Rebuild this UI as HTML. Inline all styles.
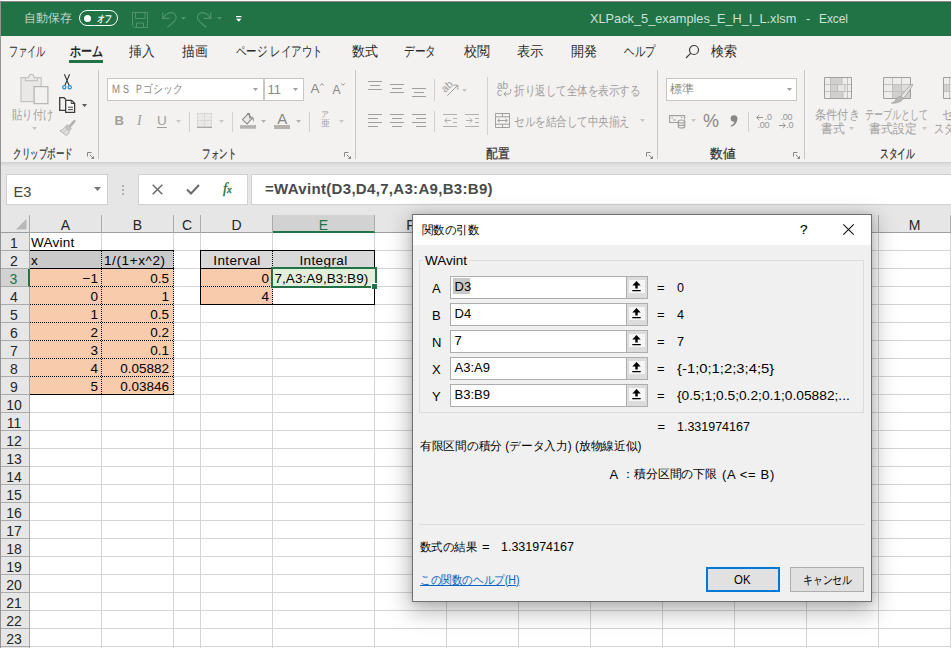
<!DOCTYPE html>
<html lang="ja"><head><meta charset="utf-8"><title>Excel</title><style>
*{box-sizing:border-box}
html,body{margin:0;padding:0}
body{width:951px;height:648px;position:relative;overflow:hidden;background:#fff;font-family:"Liberation Sans",sans-serif;font-size:12px;color:#262626}
.a{position:absolute;white-space:nowrap;line-height:1}
.t{position:absolute;white-space:nowrap;line-height:1;transform-origin:0 0}
svg{position:absolute;overflow:visible}
#title{left:0;top:0;width:951px;height:36px;background:#217346}
#tabs{left:0;top:36px;width:951px;height:32px;background:#f3f2f1}
#ribbon{left:0;top:68px;width:951px;height:94px;background:#f3f2f1}
#fbar{left:0;top:162px;width:951px;height:53px;background:#e6e6e6}
.tab{font-size:13.500px;color:#2b2a29;top:44.700px}
.gl{font-size:12.500px;color:#323130;top:148px;-webkit-text-stroke:.25px #323130}
.dim{color:#a19f9d}
.sep{position:absolute;width:1px;background:#c8c6c4}
.box{position:absolute;background:#fff;border:1px solid #c8c6c4}
.cell{position:absolute;height:18px;line-height:20.500px;font-size:13.5px;color:#000;white-space:nowrap;overflow:hidden}
.rh{position:absolute;left:1px;width:28px;height:18px;line-height:20px;text-align:center;padding-right:2px;font-size:14px;color:#262626;border-bottom:1px solid #ababab}
.ch{position:absolute;top:215px;height:18px;line-height:20px;text-align:center;font-size:14px;color:#262626;border-right:1px solid #ababab}
.vl{position:absolute;top:233px;width:1px;height:415px;background:#d4d4d4}
.dl{font-size:13px;color:#000}
.fld{position:absolute;left:450px;width:198px;height:23px;background:#fff;border:1px solid #adadad}
.fbtn{position:absolute;left:626px;width:22px;height:23px;background:#dcdcdc;border:1px solid #adadad}
.fbtn i{position:absolute;left:2px;top:3px;width:16px;height:13px;background:#f6f6f6}
</style></head><body>
<div id="title" class="a">
<div class="t" style="left:24px;top:12px;font-size:12px;color:#bdd6c7">自動保存</div>
<div class="a" style="left:79px;top:10px;width:39px;height:16px;border:1px solid #fff;border-radius:8px"></div>
<div class="a" style="left:84px;top:14.500px;width:7px;height:7px;border-radius:4px;background:#fff"></div>
<div class="t" style="left:97.500px;top:13.500px;font-size:10px;color:#fff;font-weight:bold;transform:scaleX(.72) skewX(-12deg)">オフ</div>
<svg style="left:132px;top:12px" width="16" height="16" viewBox="0 0 16 16" fill="none" stroke="#4d946d" stroke-width="1"><path d="M.5 .5h15v15H2.500l-2-2z"/><path d="M3.500 .5v6h9.500v-6M4.500 15.500v-4.500h7v4.500"/></svg>
<svg style="left:161px;top:11px" width="17" height="17" viewBox="0 0 17 17" fill="none" stroke="#4d946d" stroke-width="1.1"><path d="M1.700 1.200V7.400H8.300"/><path d="M2.300 7C4.500 3 8.500 .8 12 2c3.800 1.400 4 5.500 1.500 8L6.300 16.500"/></svg>
<svg style="left:181px;top:17px" width="5" height="3" viewBox="0 0 5 3"><path d="M0 0h5L2.500 3z" fill="#4d946d"/></svg>
<svg style="left:196px;top:11px" width="17" height="17" viewBox="0 0 17 17" fill="none" stroke="#4d946d" stroke-width="1.1"><path d="M14.700 1.200V7.400H7.800"/><path d="M14.100 7C12 3 8 .8 4.500 2C.7 3.400 .5 7.500 3 10l7.300 6.500"/></svg>
<svg style="left:216.500px;top:17px" width="5" height="3" viewBox="0 0 5 3"><path d="M0 0h5L2.500 3z" fill="#4d946d"/></svg>
<svg style="left:236px;top:16px" width="6" height="6" viewBox="0 0 6 6"><path d="M0 0h5.500v1.200H0zM0 2.800h5.500L2.750 5.800z" fill="#fff"/></svg>
<div class="t" id="ttl" style="transform:scaleX(0.981);left:590.300px;top:12px;font-size:13px;color:#cde1d4">XLPack_5_examples_E_H_I_L.xlsm</div>
<div class="t" style="left:806px;top:12px;font-size:13px;color:#cde1d4">-</div>
<div class="t" id="ttl2" style="transform:scaleX(0.912);left:818.500px;top:12px;font-size:13px;color:#cde1d4">Excel</div>
</div>
<div id="tabs" class="a"></div>
<div class="t tab" id="tab0" style="transform:scaleX(0.652);left:9px;">ファイル</div>
<div class="t tab" id="tab1" style="transform:scaleX(0.786);left:69.5px;font-weight:bold;color:#262626;">ホーム</div>
<div class="t tab" id="tab2" style="transform:scaleX(0.911);left:129px;">挿入</div>
<div class="t tab" id="tab3" style="transform:scaleX(0.911);left:182px;">描画</div>
<div class="t tab" id="tab4" style="transform:scaleX(0.747);left:236px;">ページ レイアウト</div>
<div class="t tab" id="tab5" style="transform:scaleX(0.929);left:351.5px;">数式</div>
<div class="t tab" id="tab6" style="transform:scaleX(0.762);left:404px;">データ</div>
<div class="t tab" id="tab7" style="transform:scaleX(0.929);left:464px;">校閲</div>
<div class="t tab" id="tab8" style="transform:scaleX(0.946);left:517px;">表示</div>
<div class="t tab" id="tab9" style="transform:scaleX(0.929);left:571px;">開発</div>
<div class="t tab" id="tab10" style="transform:scaleX(0.750);left:623.5px;">ヘルプ</div>
<div class="t tab" id="tab11" style="transform:scaleX(0.929);left:711px;">検索</div>
<div class="a" style="left:69px;top:60px;width:34px;height:3px;background:#217346"></div>
<svg style="left:685px;top:44px" width="15" height="15" viewBox="0 0 15 15" fill="none" stroke="#3b3a39" stroke-width="1.2"><circle cx="9" cy="6" r="4.5"/><path d="M5.8 9.2L1 14"/></svg>
<div id="ribbon" class="a"></div>
<div class="sep" style="left:98px;top:70px;height:89px"></div>
<div class="sep" style="left:355px;top:70px;height:89px"></div>
<div class="sep" style="left:657px;top:70px;height:89px"></div>
<div class="sep" style="left:804px;top:70px;height:89px"></div>
<div class="sep" style="left:189px;top:112px;height:20px;background:#d2d0ce"></div>
<div class="sep" style="left:232px;top:112px;height:20px;background:#d2d0ce"></div>
<div class="sep" style="left:309px;top:112px;height:20px;background:#d2d0ce"></div>
<div class="sep" style="left:748px;top:112px;height:20px;background:#d2d0ce"></div>
<div class="sep" style="left:434px;top:79px;height:22px;background:#d2d0ce"></div>
<div class="sep" style="left:434px;top:111px;height:21px;background:#d2d0ce"></div>
<div class="sep" style="left:487px;top:77px;height:58px;background:#d2d0ce"></div>
<div class="t gl" id="gl0" style="transform:scaleX(0.654);left:12.5px">クリップボード</div>
<div class="t gl" id="gl1" style="transform:scaleX(0.654);left:201.5px">フォント</div>
<div class="t gl" id="gl2" style="transform:scaleX(0.904);left:486px">配置</div>
<div class="t gl" id="gl3" style="transform:scaleX(0.981);left:709.5px">数値</div>
<div class="t gl" id="gl4" style="transform:scaleX(0.673);left:879.5px">スタイル</div>
<svg style="left:87px;top:152px" width="8" height="8" viewBox="0 0 8 8" fill="none" stroke="#8a8886" stroke-width="1"><path d="M.5 4.500V.5H4.500"/><path d="M2.800 2.800l3.700 3.700"/><path d="M7 3.800V7H3.800z" fill="#8a8886" stroke="none"/></svg>
<svg style="left:344px;top:152px" width="8" height="8" viewBox="0 0 8 8" fill="none" stroke="#8a8886" stroke-width="1"><path d="M.5 4.500V.5H4.500"/><path d="M2.800 2.800l3.700 3.700"/><path d="M7 3.800V7H3.800z" fill="#8a8886" stroke="none"/></svg>
<svg style="left:646px;top:152px" width="8" height="8" viewBox="0 0 8 8" fill="none" stroke="#8a8886" stroke-width="1"><path d="M.5 4.500V.5H4.500"/><path d="M2.800 2.800l3.700 3.700"/><path d="M7 3.800V7H3.800z" fill="#8a8886" stroke="none"/></svg>
<svg style="left:793px;top:152px" width="8" height="8" viewBox="0 0 8 8" fill="none" stroke="#8a8886" stroke-width="1"><path d="M.5 4.500V.5H4.500"/><path d="M2.800 2.800l3.700 3.700"/><path d="M7 3.800V7H3.800z" fill="#8a8886" stroke="none"/></svg>
<svg style="left:20px;top:73px" width="29" height="32" viewBox="0 0 29 32"><path d="M1 4.700h20.200v24H1z" fill="#e9e8e6" stroke="#c6c4c2" stroke-width="1.200"/><path d="M5.400 7.600V4.700h3.300C8.700 .3 14.100 .3 14.100 4.700h3.300v2.900z" fill="#eceae8" stroke="#c3c1bf" stroke-width="1.100"/><path d="M14.100 13.700h13.800v16.900H14.100z" fill="#f2f1f0" stroke="#b9b7b5" stroke-width="1.300"/></svg>
<div class="t dim" id="paste" style="transform:scaleX(0.798);left:11.5px;top:108.700px;font-size:12.500px">貼り付け</div>
<svg style="left:32px;top:127px" width="5" height="3" viewBox="0 0 5 3"><path d="M0 0h5L2.500 3z" fill="#c8c6c4"/></svg>
<svg style="left:62px;top:73.500px" width="10" height="16" viewBox="0 0 10 16" fill="none" stroke="#3b3a39" stroke-width="1.100"><path d="M2.400 .3L7 11.300M7.600 .3L3 11.300"/><circle cx="2.300" cy="13.200" r="1.600" stroke="#1e8bcd" stroke-width="1.200"/><circle cx="7.700" cy="13.200" r="1.600" stroke="#1e8bcd" stroke-width="1.200"/></svg>
<svg style="left:59px;top:97px" width="17" height="16" viewBox="0 0 17 16" fill="none" stroke="#3b3a39" stroke-width="1.300"><path d="M6.600 13.300H.7V.7h4.200l2 1.800"/><path d="M6.700 3.300h5.700l3.200 3v9H6.700z" fill="#fff"/><path d="M12.200 3.500v3h3.200" stroke-width="1"/><path d="M9 10.200h5M9 12.600h5" stroke-width="1"/></svg>
<svg style="left:81.500px;top:104px" width="5" height="3.500" viewBox="0 0 5 3.500"><path d="M0 0h5L2.500 3.300z" fill="#605e5c"/></svg>
<svg style="left:59px;top:120px" width="17" height="16" viewBox="0 0 17 16"><path d="M15.400 1.200L11 6.200" stroke="#b3b0ad" stroke-width="2.600" stroke-linecap="round" fill="none"/><path d="M8.200 4.600l4.300 3.800-1.700 2-4.400-3.700z" fill="#c8c6c4" stroke="#b3b0ad" stroke-width=".8"/><path d="M5.800 7.300l4.600 3.800c-.3 2-1.500 3.600-3 4.500L.8 10.700c2-.5 3.800-1.700 5-3.400z" fill="#dedcda" stroke="#b3b0ad" stroke-width=".9"/><path d="M3.500 12.800l4.500-3" stroke="#c8c6c4" stroke-width=".8"/></svg>
<div class="box" style="left:107px;top:78px;width:157px;height:23px"></div>
<div class="t dim" id="fname" style="transform:scaleX(0.824);left:111px;top:83px;font-size:12px;color:#8a8886">ＭＳ Ｐゴシック</div>
<svg style="left:253px;top:88px" width="5" height="3" viewBox="0 0 5 3"><path d="M0 0h5L2.500 3z" fill="#a19f9d"/></svg>
<div class="box" style="left:264px;top:78px;width:40px;height:23px"></div>
<div class="t" style="left:267.5px;top:83px;font-size:13px;color:#8a8886">11</div>
<svg style="left:293px;top:88px" width="5" height="3" viewBox="0 0 5 3"><path d="M0 0h5L2.500 3z" fill="#a19f9d"/></svg>
<div class="t" style="left:310.500px;top:82px;font-size:13.500px;color:#8a8886">A</div><svg style="left:319.500px;top:82.500px" width="4" height="3" viewBox="0 0 4 3" fill="none" stroke="#8a8886" stroke-width=".9"><path d="M.2 2.600L1.900 .6l1.700 2"/></svg>
<div class="t" style="left:332.500px;top:83.800px;font-size:12px;color:#8a8886">A</div><svg style="left:340.500px;top:82.500px" width="4" height="3" viewBox="0 0 4 3" fill="none" stroke="#8a8886" stroke-width=".9"><path d="M.2 .4L1.900 2.400l1.700-2"/></svg>
<div class="t" style="left:114.500px;top:114px;font-size:13px;font-weight:bold;color:#a19f9d;font-family:'Liberation Sans',sans-serif">B</div>
<div class="t" style="left:137px;top:113.5px;font-size:14px;font-style:italic;color:#a19f9d;font-family:'Liberation Serif',serif">I</div>
<div class="t" style="left:157px;top:113.5px;font-size:13.5px;color:#a19f9d;text-decoration:underline;text-underline-offset:2px">U</div>
<svg style="left:176px;top:120px" width="5" height="3" viewBox="0 0 5 3"><path d="M0 0h5L2.500 3z" fill="#c8c6c4"/></svg>
<svg style="left:219px;top:120px" width="5" height="3" viewBox="0 0 5 3"><path d="M0 0h5L2.500 3z" fill="#c8c6c4"/></svg>
<svg style="left:261px;top:120px" width="5" height="3" viewBox="0 0 5 3"><path d="M0 0h5L2.500 3z" fill="#b3b0ad"/></svg>
<svg style="left:296px;top:120px" width="5" height="3" viewBox="0 0 5 3"><path d="M0 0h5L2.500 3z" fill="#b3b0ad"/></svg>
<svg style="left:339px;top:120px" width="5" height="3" viewBox="0 0 5 3"><path d="M0 0h5L2.500 3z" fill="#c8c6c4"/></svg>
<svg style="left:197px;top:113px" width="15" height="15" viewBox="0 0 15 15"><path d="M0 0h15v14H0z" fill="#eae9e8"/><g fill="none" stroke="#cfcdcb" stroke-width="1" stroke-dasharray="2 1.300"><path d="M.5 0v14M14.500 0v14M7.500 0v14M0 .5h15M0 7.500h15"/></g><path d="M0 14.300h15" stroke="#a19f9d" stroke-width="1.200"/></svg>
<svg style="left:240px;top:111px" width="17" height="19" viewBox="0 0 17 19"><path d="M2.500 8.700L8.200 2.900l3.700 4.800-4.800 5.200z" fill="#ecebea" stroke="#8a8886" stroke-width="1.100" stroke-linejoin="round"/><path d="M7.300 3.900c0-2.300 2.400-2.300 2.400 0v3.900" fill="none" stroke="#8a8886" stroke-width="1.100"/><path d="M11.300 5.400c2.300 0 3.500 2.300 2.400 6.300-.2-2.600-.9-3.800-2.700-4.800z" fill="#a19f9d"/><path d="M0 14.100h16v3.600H0z" fill="#b5b1ae"/></svg>
<div class="t" style="left:277.300px;top:110.500px;font-size:15px;color:#8a8886">A</div>
<div class="a" style="left:274px;top:125.100px;width:16px;height:3.600px;background:#b5b1ae"></div>
<div class="t" style="left:321px;top:111px;font-size:8px;color:#a19f9d">ア</div><div class="t" style="left:320.5px;top:119px;font-size:9px;color:#a19f9d">亜</div>
<div class="a" style="left:368.0px;top:81.0px;width:14px;height:1px;background:#a19f9d"></div><div class="a" style="left:370.0px;top:85.1px;width:10px;height:1px;background:#a19f9d"></div><div class="a" style="left:368.0px;top:89.2px;width:14px;height:1px;background:#a19f9d"></div>
<div class="a" style="left:390.0px;top:84.0px;width:14px;height:1px;background:#a19f9d"></div><div class="a" style="left:392.0px;top:88.1px;width:10px;height:1px;background:#a19f9d"></div><div class="a" style="left:390.0px;top:92.2px;width:14px;height:1px;background:#a19f9d"></div>
<div class="a" style="left:412.0px;top:88.0px;width:14px;height:1px;background:#a19f9d"></div><div class="a" style="left:414.0px;top:92.1px;width:10px;height:1px;background:#a19f9d"></div><div class="a" style="left:412.0px;top:96.2px;width:14px;height:1px;background:#a19f9d"></div>
<div class="a" style="left:368px;top:114.0px;width:14px;height:1px;background:#a19f9d"></div><div class="a" style="left:368px;top:118.1px;width:10px;height:1px;background:#a19f9d"></div><div class="a" style="left:368px;top:122.2px;width:14px;height:1px;background:#a19f9d"></div><div class="a" style="left:368px;top:126.3px;width:10px;height:1px;background:#a19f9d"></div>
<div class="a" style="left:390.0px;top:114.0px;width:14px;height:1px;background:#a19f9d"></div><div class="a" style="left:392.0px;top:118.1px;width:10px;height:1px;background:#a19f9d"></div><div class="a" style="left:390.0px;top:122.2px;width:14px;height:1px;background:#a19f9d"></div><div class="a" style="left:392.0px;top:126.3px;width:10px;height:1px;background:#a19f9d"></div>
<div class="a" style="left:412px;top:114.0px;width:14px;height:1px;background:#a19f9d"></div><div class="a" style="left:416px;top:118.1px;width:10px;height:1px;background:#a19f9d"></div><div class="a" style="left:412px;top:122.2px;width:14px;height:1px;background:#a19f9d"></div><div class="a" style="left:416px;top:126.3px;width:10px;height:1px;background:#a19f9d"></div>
<div class="t" style="left:441px;top:80.500px;font-size:10.500px;color:#a19f9d;transform:rotate(-42deg);transform-origin:50% 50%">ab</div>
<svg style="left:446px;top:84px" width="13" height="13" viewBox="0 0 13 13" fill="none" stroke="#a19f9d" stroke-width="1"><path d="M1.300 11.700L11.500 1.500M7.300 1.200h4.500v4.500"/></svg>
<svg style="left:462px;top:88.500px" width="5" height="3" viewBox="0 0 5 3"><path d="M0 0h5L2.500 3z" fill="#c8c6c4"/></svg>
<div class="a" style="left:443px;top:114px;width:14px;height:1px;background:#b3b0ad"></div><div class="a" style="left:443px;top:126.300px;width:14px;height:1px;background:#b3b0ad"></div>
<div class="a" style="left:452.5px;top:118.100px;width:4.500px;height:1px;background:#b3b0ad"></div><div class="a" style="left:452.5px;top:122.200px;width:4.500px;height:1px;background:#b3b0ad"></div>
<svg style="left:443.5px;top:117px" width="8" height="7" viewBox="0 0 8 7" fill="none" stroke="#b3b0ad" stroke-width="1"><path d="M7 3.500H.8M3.300 1L.7 3.500 3.300 6"/></svg>
<div class="a" style="left:465px;top:114px;width:14px;height:1px;background:#b3b0ad"></div><div class="a" style="left:465px;top:126.300px;width:14px;height:1px;background:#b3b0ad"></div>
<div class="a" style="left:474.5px;top:118.100px;width:4.500px;height:1px;background:#b3b0ad"></div><div class="a" style="left:474.5px;top:122.200px;width:4.500px;height:1px;background:#b3b0ad"></div>
<svg style="left:465.5px;top:117px" width="8" height="7" viewBox="0 0 8 7" fill="none" stroke="#b3b0ad" stroke-width="1"><path d="M0 3.500h6.200M3.700 1l2.600 2.500L3.700 6"/></svg>
<div class="t" style="left:497px;top:81.500px;font-size:10px;color:#a19f9d;line-height:7.500px">ab<br>c</div>
<svg style="left:502.500px;top:89px" width="9" height="8" viewBox="0 0 9 8" fill="none" stroke="#a19f9d" stroke-width="1"><path d="M7.700 0v2.300c0 2-1 2.700-3 2.700H1M3.300 2.600L.8 5l2.500 2.400"/></svg>
<div class="t dim" id="wrap" style="transform:scaleX(0.808);left:514px;top:84.700px;font-size:12.500px">折り返して全体を表示する</div>
<svg style="left:495px;top:113px" width="15" height="15" viewBox="0 0 15 15" fill="none" stroke="#a19f9d" stroke-width="1"><path d="M.5 .5h14v14H.5zM.5 3.800h14M.5 11.200h14M7.500 .5v3.300M7.500 11.200v3.300"/><path d="M2.800 7.500h9.400M4.600 5.800L2.700 7.500l1.900 1.700M10.400 5.800l1.900 1.700-1.900 1.700"/></svg>
<div class="t dim" id="merge" style="transform:scaleX(0.811);left:514px;top:115.700px;font-size:12.500px">セルを結合して中央揃え</div>
<svg style="left:640px;top:119px" width="5" height="3" viewBox="0 0 5 3"><path d="M0 0h5L2.500 3z" fill="#c8c6c4"/></svg>
<div class="box" style="left:666px;top:78px;width:131px;height:23px"></div>
<div class="t" style="left:669.500px;top:83px;font-size:12px;color:#8a8886">標準</div>
<svg style="left:787px;top:88px" width="5" height="3" viewBox="0 0 5 3"><path d="M0 0h5L2.500 3z" fill="#a19f9d"/></svg>
<svg style="left:669px;top:115px" width="17" height="14" viewBox="0 0 17 14" fill="none" stroke="#a19f9d" stroke-width="1.1"><path d="M10 7.5H.6V.6h15v4"/><ellipse cx="12.5" cy="6.5" rx="3.3" ry="1.5" fill="#f3f2f1"/><path d="M9.2 6.5v5c0 2 6.6 2 6.6 0v-5M9.2 9c0 2 6.6 2 6.6 0"/><path d="M2.5 3h1.5M4 5h3M12 2.5h1.5" /></svg>
<svg style="left:691px;top:119px" width="5" height="3" viewBox="0 0 5 3"><path d="M0 0h5L2.500 3z" fill="#c8c6c4"/></svg>
<div class="t" style="left:703px;top:111.5px;font-size:18px;color:#8a8886">%</div>
<svg style="left:729px;top:114px" width="10" height="14" viewBox="0 0 10 14"><circle cx="5" cy="4.500" r="3.300" fill="#8a8886"/><path d="M8.200 3.800C8.900 8 6.200 11.500 2 12.800l-.4-1.100C4 10.600 5.500 9 5.300 7.300z" fill="#8a8886"/></svg>
<svg style="left:756px;top:114px" width="8" height="7" viewBox="0 0 8 7" fill="none" stroke="#979593" stroke-width="1"><path d="M7 3.500H.8M3.300 1L.7 3.500 3.300 6"/></svg>
<div class="t" style="left:764.500px;top:112.800px;font-size:9px;color:#979593">.0</div>
<div class="t" style="left:757.500px;top:121.200px;font-size:9px;color:#979593;letter-spacing:-.3px">.00</div>
<div class="t" style="left:780.500px;top:112.800px;font-size:9px;color:#979593;letter-spacing:-.3px">.00</div>
<svg style="left:778.500px;top:121.800px" width="8" height="7" viewBox="0 0 8 7" fill="none" stroke="#979593" stroke-width="1"><path d="M0 3.500h6.200M3.700 1l2.600 2.500L3.700 6"/></svg>
<div class="t" style="left:786px;top:121.200px;font-size:9px;color:#979593">.0</div>
<svg style="left:824px;top:77px" width="28" height="22" viewBox="0 0 28 22"><path d="M.5 .5h27v21H.5z" fill="#eeedec"/><path d="M6.500 .5h11.500v7H6.500zM6.500 7.500h7v7h-7zM6.500 14.500h12.500v7H6.500z" fill="#d2d0ce"/><path d="M13.500 7.500h7.500v7h-7.500z" fill="#e6e5e3"/><g fill="none" stroke="#c2c0be" stroke-width="1"><path d="M6.500 .5v21M23.500 .5v21M.5 7.500h27M.5 14.500h27M18 .5v7M21 7.500v7M19 14.500v7M13.500 7.500v7"/></g><path d="M.5 .5h27v21H.5z" fill="none" stroke="#a19f9d"/></svg>
<div class="t dim" id="cf1" style="transform:scaleX(0.865);left:815px;top:108.500px;font-size:12.500px">条件付き</div>
<div class="t dim" id="cf2" style="transform:scaleX(0.904);left:821px;top:122.800px;font-size:12.500px">書式</div>
<svg style="left:849px;top:127px" width="5" height="3" viewBox="0 0 5 3"><path d="M0 0h5L2.500 3z" fill="#c8c6c4"/></svg>
<svg style="left:883px;top:77px" width="31" height="28" viewBox="0 0 31 28"><path d="M.5 .5h27v21H.5z" fill="#eeedec"/><path d="M9.500 7.500h9v14h-9zM18.500 14.500h9v7h-9z" fill="#d2d0ce"/><path d="M18.500 7.500h9v7h-9z" fill="#e0dedc"/><g fill="none" stroke="#c2c0be" stroke-width="1"><path d="M9.500 .5v21M18.500 .5v21M.5 7.500h27M.5 14.500h27"/></g><path d="M.5 .5h27v21H.5z" fill="none" stroke="#a19f9d"/><path d="M29.600 7.200c.9.700-7 12.600-9.500 14.200l-2.400-1.700c1.400-2.700 11-13.200 11.900-12.500z" fill="#e6e5e3" stroke="#a19f9d" stroke-width=".9"/><path d="M17.600 19.600l2.600 1.900c-.9 2.900-5.800 5-11.700 4.600 2.300-.7 3.500-1.700 4.300-3.600.8-1.900 2.900-3 4.800-2.900z" fill="#b9b7b5" stroke="#a19f9d" stroke-width=".8"/></svg>
<div class="t dim" id="tb1" style="transform:scaleX(0.698);left:865px;top:108.500px;font-size:12.500px">テーブルとして</div>
<div class="t dim" id="tb2" style="transform:scaleX(0.913);left:869.200px;top:122.800px;font-size:12.500px">書式設定</div>
<svg style="left:921.500px;top:127px" width="5" height="3" viewBox="0 0 5 3"><path d="M0 0h5L2.500 3z" fill="#c8c6c4"/></svg>
<svg style="left:943px;top:77px" width="28" height="22" viewBox="0 0 28 22"><path d="M.5 .5h27v21H.5z" fill="#eeedec"/><path d="M.5 7.500h6v7h-6z" fill="#d2d0ce"/><g fill="none" stroke="#c2c0be" stroke-width="1"><path d="M6.500 .5v21M.5 7.500h27M.5 14.500h27"/></g><path d="M.5 .5h27v21H.5z" fill="none" stroke="#a19f9d"/></svg>
<div class="t dim" id="st1" style="transform:scaleX(0.872);left:941.500px;top:108.500px;font-size:12.500px">セルの</div>
<div class="t dim" id="st2" style="transform:scaleX(0.769);left:934.200px;top:122.800px;font-size:12.500px">スタイル</div>
<div id="fbar" class="a"></div>
<div class="a" style="left:0;top:162px;width:951px;height:5px;background:linear-gradient(#cfcfcf,#dcdcdc 40%,#e6e6e6)"></div>
<div class="box" style="left:6px;top:174px;width:102px;height:31px;border-color:#d0d0d0"></div>
<div class="t" style="left:13.500px;top:184.500px;font-size:14.500px;color:#444">E3</div>
<svg style="left:94px;top:187px" width="7" height="4" viewBox="0 0 7 4"><path d="M0 0h7L3.500 4z" fill="#777"/></svg>
<div class="a" style="left:122px;top:185px;width:2px;height:2px;background:#b0b0b0"></div>
<div class="a" style="left:122px;top:189px;width:2px;height:2px;background:#b0b0b0"></div>
<div class="a" style="left:122px;top:193px;width:2px;height:2px;background:#b0b0b0"></div>
<div class="box" style="left:138px;top:174px;width:110px;height:31px;border-color:#d0d0d0"></div>
<svg style="left:152px;top:184px" width="11" height="11" viewBox="0 0 11 11" fill="none" stroke="#6a6a6a" stroke-width="1.5"><path d="M.7 .7l9.600 9.600M10.300 .7L.7 10.300"/></svg>
<svg style="left:186px;top:184px" width="14" height="11" viewBox="0 0 14 11" fill="none" stroke="#6a6a6a" stroke-width="2"><path d="M1 5.500l4 4L13 1"/></svg>
<div class="t" style="left:223px;top:181px;font-size:14.500px;font-style:italic;color:#217346;-webkit-text-stroke:.3px #217346;font-family:'Liberation Serif',serif">f<span style="font-size:10.500px">x</span></div>
<div class="box" style="left:251px;top:174px;width:710px;height:31px;border-color:#d0d0d0"></div>
<div class="t" id="ftxt" style="transform:scaleX(1.002);left:264.500px;top:181.300px;font-size:15px;font-weight:bold;letter-spacing:.3px;color:#4a4a4a">=WAvint(D3,D4,7,A3:A9,B3:B9)</div>
<div class="a" style="left:0;top:215px;width:951px;height:18px;background:#e6e6e6;border-bottom:1px solid #9e9e9e"></div>
<div class="a" style="left:0;top:233px;width:30px;height:415px;background:#e6e6e6;border-right:1px solid #a6a6a6"></div>
<div class="a" style="left:30px;top:233px;width:921px;height:415px;background:repeating-linear-gradient(#fff 0,#fff 17px,#d4d4d4 17px,#d4d4d4 18px)"></div>
<div class="vl" style="left:101px"></div>
<div class="vl" style="left:173px"></div>
<div class="vl" style="left:200px"></div>
<div class="vl" style="left:272px"></div>
<div class="vl" style="left:374px"></div>
<div class="vl" style="left:446px"></div>
<div class="vl" style="left:518px"></div>
<div class="vl" style="left:590px"></div>
<div class="vl" style="left:662px"></div>
<div class="vl" style="left:734px"></div>
<div class="vl" style="left:806px"></div>
<div class="vl" style="left:878px"></div>
<div class="vl" style="left:950px"></div>
<div class="ch" style="left:1px;width:29px"></div>
<svg style="left:16px;top:219px" width="11" height="11" viewBox="0 0 11 11"><path d="M10.500 0v10.500H0z" fill="#b8b8b8"/></svg>
<div class="ch" style="left:30px;width:72px;">A</div>
<div class="ch" style="left:102px;width:72px;">B</div>
<div class="ch" style="left:174px;width:27px;">C</div>
<div class="ch" style="left:201px;width:72px;">D</div>
<div class="ch" style="left:273px;width:102px;background:#d2d2d2;color:#217346;border-bottom:2px solid #217346;">E</div>
<div class="ch" style="left:375px;width:72px;">F</div>
<div class="ch" style="left:447px;width:72px;">G</div>
<div class="ch" style="left:519px;width:72px;">H</div>
<div class="ch" style="left:591px;width:72px;">I</div>
<div class="ch" style="left:663px;width:72px;">J</div>
<div class="ch" style="left:735px;width:72px;">K</div>
<div class="ch" style="left:807px;width:72px;">L</div>
<div class="ch" style="left:879px;width:72px;">M</div>
<div class="rh" style="top:233px;">1</div>
<div class="rh" style="top:251px;">2</div>
<div class="rh" style="top:269px;background:#d2d2d2;color:#217346;border-right:2px solid #217346;width:29px;">3</div>
<div class="rh" style="top:287px;">4</div>
<div class="rh" style="top:305px;">5</div>
<div class="rh" style="top:323px;">6</div>
<div class="rh" style="top:341px;">7</div>
<div class="rh" style="top:359px;">8</div>
<div class="rh" style="top:377px;">9</div>
<div class="rh" style="top:395px;">10</div>
<div class="rh" style="top:413px;">11</div>
<div class="rh" style="top:431px;">12</div>
<div class="rh" style="top:449px;">13</div>
<div class="rh" style="top:467px;">14</div>
<div class="rh" style="top:485px;">15</div>
<div class="rh" style="top:503px;">16</div>
<div class="rh" style="top:521px;">17</div>
<div class="rh" style="top:539px;">18</div>
<div class="rh" style="top:557px;">19</div>
<div class="rh" style="top:575px;">20</div>
<div class="rh" style="top:593px;">21</div>
<div class="rh" style="top:611px;">22</div>
<div class="rh" style="top:629px;">23</div>
<div class="rh" style="top:647px;">24</div>
<div class="cell" style="left:30px;top:233px;width:71px;text-align:left;padding-left:1px;letter-spacing:.25px;">WAvint</div>
<div class="cell" style="left:30px;top:251px;width:72px;background:#c9c9c9;height:17px;text-align:left;padding-left:1px;">x</div>
<div class="cell" style="left:102px;top:251px;width:72px;background:#c9c9c9;height:17px;text-align:left;padding-left:2px;letter-spacing:.6px;">1/(1+x^2)</div>
<div class="cell" style="left:30px;top:269px;width:72px;background:#f8cbad;height:17px;text-align:right;padding-right:4px;">−1</div>
<div class="cell" style="left:102px;top:269px;width:72px;background:#f8cbad;height:17px;text-align:right;padding-right:5px;">0.5</div>
<div class="cell" style="left:30px;top:287px;width:72px;background:#f8cbad;height:17px;text-align:right;padding-right:4px;">0</div>
<div class="cell" style="left:102px;top:287px;width:72px;background:#f8cbad;height:17px;text-align:right;padding-right:5px;">1</div>
<div class="cell" style="left:30px;top:305px;width:72px;background:#f8cbad;height:17px;text-align:right;padding-right:4px;">1</div>
<div class="cell" style="left:102px;top:305px;width:72px;background:#f8cbad;height:17px;text-align:right;padding-right:5px;">0.5</div>
<div class="cell" style="left:30px;top:323px;width:72px;background:#f8cbad;height:17px;text-align:right;padding-right:4px;">2</div>
<div class="cell" style="left:102px;top:323px;width:72px;background:#f8cbad;height:17px;text-align:right;padding-right:5px;">0.2</div>
<div class="cell" style="left:30px;top:341px;width:72px;background:#f8cbad;height:17px;text-align:right;padding-right:4px;">3</div>
<div class="cell" style="left:102px;top:341px;width:72px;background:#f8cbad;height:17px;text-align:right;padding-right:5px;">0.1</div>
<div class="cell" style="left:30px;top:359px;width:72px;background:#f8cbad;height:17px;text-align:right;padding-right:4px;">4</div>
<div class="cell" style="left:102px;top:359px;width:72px;background:#f8cbad;height:17px;text-align:right;padding-right:5px;">0.05882</div>
<div class="cell" style="left:30px;top:377px;width:72px;background:#f8cbad;height:17px;text-align:right;padding-right:4px;">5</div>
<div class="cell" style="left:102px;top:377px;width:72px;background:#f8cbad;height:17px;text-align:right;padding-right:5px;">0.03846</div>
<div class="cell" style="left:201px;top:251px;width:72px;background:#d9d9d9;height:17px;text-align:center;letter-spacing:.4px;">Interval</div>
<div class="cell" style="left:273px;top:251px;width:101px;background:#d9d9d9;height:17px;text-align:center;letter-spacing:.4px;">Integral</div>
<div class="cell" style="left:201px;top:269px;width:72px;background:#f8cbad;height:17px;text-align:right;padding-right:4px;">0</div>
<div class="cell" style="left:201px;top:287px;width:72px;background:#f8cbad;height:17px;text-align:right;padding-right:4px;">4</div>
<div class="a" style="left:30px;top:250px;width:144px;height:1px;background:#000"></div>
<div class="a" style="left:30px;top:268px;width:144px;height:1px;background:#000"></div>
<div class="a" style="left:30px;top:394px;width:144px;height:1px;background:#000"></div>
<div class="a" style="left:101px;top:251px;width:1px;height:143px;background:repeating-linear-gradient(#000 0,#000 1px,transparent 1px,transparent 2px)"></div>
<div class="a" style="left:173px;top:251px;width:1px;height:143px;background:repeating-linear-gradient(#000 0,#000 1px,transparent 1px,transparent 2px)"></div>
<div class="a" style="left:30px;top:286px;width:144px;height:1px;background:repeating-linear-gradient(90deg,#000 0,#000 1px,transparent 1px,transparent 2px)"></div>
<div class="a" style="left:30px;top:304px;width:144px;height:1px;background:repeating-linear-gradient(90deg,#000 0,#000 1px,transparent 1px,transparent 2px)"></div>
<div class="a" style="left:30px;top:322px;width:144px;height:1px;background:repeating-linear-gradient(90deg,#000 0,#000 1px,transparent 1px,transparent 2px)"></div>
<div class="a" style="left:30px;top:340px;width:144px;height:1px;background:repeating-linear-gradient(90deg,#000 0,#000 1px,transparent 1px,transparent 2px)"></div>
<div class="a" style="left:30px;top:358px;width:144px;height:1px;background:repeating-linear-gradient(90deg,#000 0,#000 1px,transparent 1px,transparent 2px)"></div>
<div class="a" style="left:30px;top:376px;width:144px;height:1px;background:repeating-linear-gradient(90deg,#000 0,#000 1px,transparent 1px,transparent 2px)"></div>
<div class="a" style="left:200px;top:250px;width:175px;height:55px;border:1px solid #000"></div>
<div class="a" style="left:201px;top:268px;width:72px;height:1px;background:#000"></div>
<div class="a" style="left:272px;top:251px;width:1px;height:53px;background:repeating-linear-gradient(#000 0,#000 1px,transparent 1px,transparent 2px)"></div>
<div class="a" style="left:201px;top:286px;width:72px;height:1px;background:repeating-linear-gradient(90deg,#000 0,#000 1px,transparent 1px,transparent 2px)"></div>
<div class="a" style="left:271px;top:267px;width:106px;height:21px;border:2px solid #217346;background:#e2efda"></div>
<div class="cell" style="left:274.500px;top:269px;width:99px;font-size:13.500px;letter-spacing:.05px">7,A3:A9,B3:B9)</div>
<div class="a" style="left:371px;top:283px;width:6px;height:6px;background:#217346;border-left:1px solid #fff;border-top:1px solid #fff"></div>
<div class="a" style="left:0;top:1px;width:1px;height:647px;background:#979393"></div>
<div class="a" style="left:0;top:0;width:951px;height:1px;background:#fff"></div><div class="a" style="left:0;top:1px;width:951px;height:1px;background:#8a8585"></div>
<div class="a" id="dlg" style="left:412px;top:214px;width:460px;height:388px;background:#f0f0f0;border:1px solid #707070;box-shadow:0 7px 22px 2px rgba(0,0,0,.30),0 0 6px rgba(0,0,0,.12)"></div>
<div class="a" style="left:413px;top:215px;width:458px;height:30px;background:#fff"></div>
<div class="t dl" id="dtitle" style="transform:scaleX(0.958);left:421.5px;top:224px;font-size:12px">関数の引数</div>
<div class="t dl" style="left:800px;top:222.5px;font-size:13.500px;-webkit-text-stroke:.15px #000">?</div>
<svg style="left:843px;top:224px" width="11" height="11" viewBox="0 0 11 11" fill="none" stroke="#111" stroke-width="1.1"><path d="M.3 .3l10.400 10.400M10.700 .3L.3 10.700"/></svg>
<div class="a" style="left:419px;top:260px;width:445px;height:153px;border:1px solid #dcdcdc"></div>
<div class="t dl" style="left:423px;top:254px;padding:0 2px;background:#f0f0f0;font-size:13.500px">WAvint</div>
<div class="t dl" style="left:432px;top:282px;font-size:13px">A</div>
<div class="fld" style="top:276px"></div>
<div class="a" style="left:453px;top:278px;width:17px;height:16px;background:#c8c8c8"></div>
<div class="t dl" style="left:454.5px;top:280px;font-size:13px">D3</div>
<div class="fbtn" style="top:276px"><i></i></div>
<svg style="left:632px;top:280.7px" width="9" height="10.300" viewBox="0 0 9 10.300"><path d="M4.500 0L.3 4.400h3V7.600h2.400V4.400h3zM.3 9h8.400v1.200H.3z" fill="#000"/></svg>
<div class="t dl" style="left:657px;top:281px;font-size:13px">=</div>
<div class="t dl" id="rv0" style="transform:scaleX(0.968);left:676.5px;top:281px;font-size:13px">0</div>
<div class="t dl" style="left:432px;top:309px;font-size:13px">B</div>
<div class="fld" style="top:303px"></div>
<div class="t dl" style="left:454.5px;top:307px;font-size:13px">D4</div>
<div class="fbtn" style="top:303px"><i></i></div>
<svg style="left:632px;top:307.7px" width="9" height="10.300" viewBox="0 0 9 10.300"><path d="M4.500 0L.3 4.400h3V7.600h2.400V4.400h3zM.3 9h8.400v1.200H.3z" fill="#000"/></svg>
<div class="t dl" style="left:657px;top:308px;font-size:13px">=</div>
<div class="t dl" id="rv1" style="transform:scaleX(0.968);left:676.5px;top:308px;font-size:13px">4</div>
<div class="t dl" style="left:432px;top:336px;font-size:13px">N</div>
<div class="fld" style="top:330px"></div>
<div class="t dl" style="left:454.5px;top:334px;font-size:13px">7</div>
<div class="fbtn" style="top:330px"><i></i></div>
<svg style="left:632px;top:334.7px" width="9" height="10.300" viewBox="0 0 9 10.300"><path d="M4.500 0L.3 4.400h3V7.600h2.400V4.400h3zM.3 9h8.400v1.200H.3z" fill="#000"/></svg>
<div class="t dl" style="left:657px;top:335px;font-size:13px">=</div>
<div class="t dl" id="rv2" style="transform:scaleX(0.968);left:676.5px;top:335px;font-size:13px">7</div>
<div class="t dl" style="left:432px;top:363px;font-size:13px">X</div>
<div class="fld" style="top:357px"></div>
<div class="t dl" style="left:454.5px;top:361px;font-size:13px">A3:A9</div>
<div class="fbtn" style="top:357px"><i></i></div>
<svg style="left:632px;top:361.7px" width="9" height="10.300" viewBox="0 0 9 10.300"><path d="M4.500 0L.3 4.400h3V7.600h2.400V4.400h3zM.3 9h8.400v1.200H.3z" fill="#000"/></svg>
<div class="t dl" style="left:657px;top:362px;font-size:13px">=</div>
<div class="t dl" id="rv3" style="transform:scaleX(1.140);left:676.5px;top:362px;font-size:13px">{-1;0;1;2;3;4;5}</div>
<div class="t dl" style="left:432px;top:390px;font-size:13px">Y</div>
<div class="fld" style="top:384px"></div>
<div class="t dl" style="left:454.5px;top:388px;font-size:13px">B3:B9</div>
<div class="fbtn" style="top:384px"><i></i></div>
<svg style="left:632px;top:388.7px" width="9" height="10.300" viewBox="0 0 9 10.300"><path d="M4.500 0L.3 4.400h3V7.600h2.400V4.400h3zM.3 9h8.400v1.200H.3z" fill="#000"/></svg>
<div class="t dl" style="left:657px;top:389px;font-size:13px">=</div>
<div class="t dl" id="rv4" style="transform:scaleX(1.058);left:676.5px;top:389px;font-size:13px">{0.5;1;0.5;0.2;0.1;0.05882;...</div>
<div class="t dl" style="left:657.5px;top:420px;font-size:13px">=</div>
<div class="t dl" id="rv5" style="transform:scaleX(0.960);left:676.5px;top:420px;font-size:13px">1.331974167</div>
<div class="t dl" id="d1" style="transform:scaleX(0.977);left:419.5px;top:439.5px;font-size:12px">有限区間の積分 (データ入力) (放物線近似)</div>
<div class="t dl" style="left:609.5px;top:467.5px;font-size:13px">A</div>
<div class="t dl" id="d2" style="transform:scaleX(0.990);left:622px;top:468px;font-size:12px">：積分区間の下限</div>
<div class="t dl" style="left:722px;top:467.500px;font-size:13px;letter-spacing:.65px">(A &lt;= B)</div>
<div class="a" style="left:419px;top:524px;width:446px;height:1px;background:#dcdcdc"></div>
<div class="t dl" id="d3" style="transform:scaleX(0.950);left:419.5px;top:541px;font-size:12px">数式の結果</div>
<div class="t dl" style="left:482px;top:540px;font-size:13px">=</div>
<div class="t dl" id="rv6" style="transform:scaleX(0.960);left:500.5px;top:540px;font-size:13px">1.331974167</div>
<div class="t" id="d4" style="transform:scaleX(0.883);left:419.5px;top:573.5px;font-size:12px;color:#0563c1;text-decoration:underline">この関数のヘルプ(H)</div>
<div class="a" style="left:706px;top:567px;width:74px;height:25px;background:#e1e1e1;border:2px solid #0078d7"></div>
<div class="t dl" id="okb" style="transform:scaleX(0.878);left:734px;top:573px;font-size:13px">OK</div>
<div class="a" style="left:790px;top:567px;width:74px;height:25px;background:#e1e1e1;border:1px solid #adadad"></div>
<div class="t dl" id="d5" style="transform:scaleX(0.817);left:803px;top:573.5px;font-size:12px">キャンセル</div>
</body></html>
